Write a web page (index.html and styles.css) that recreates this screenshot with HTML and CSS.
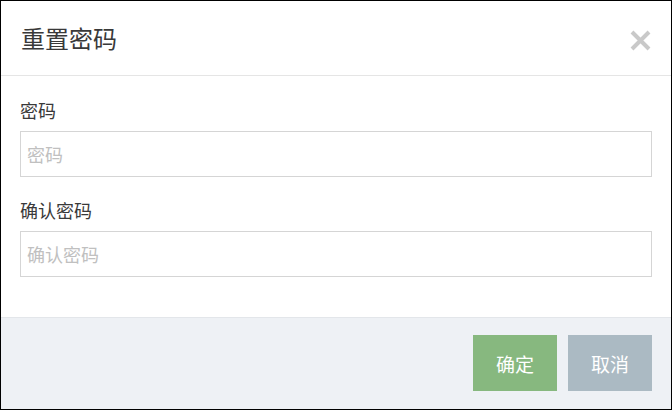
FILE: index.html
```html
<!DOCTYPE html>
<html lang="zh-CN">
<head>
<meta charset="utf-8">
<title>重置密码</title>
<link rel="stylesheet" href="styles.css">
</head>
<body>
<div class="modal">
  <div class="modal-header">
    <h4 class="modal-title">重置密码</h4>
    <button class="close" type="button" aria-label="关闭">
      <svg width="21" height="21" viewBox="0 0 21 21"><path d="M2 2 L19 19 M19 2 L2 19" stroke="#c9c9c9" stroke-width="4" stroke-linecap="butt"/></svg>
    </button>
  </div>
  <div class="modal-body">
    <div class="field">
      <label class="label">密码</label>
      <input class="input" type="password" placeholder="密码">
    </div>
    <div class="field">
      <label class="label">确认密码</label>
      <input class="input" type="password" placeholder="确认密码">
    </div>
  </div>
  <div class="modal-footer">
    <button class="btn btn-ok" type="button">确定</button>
    <button class="btn btn-cancel" type="button">取消</button>
  </div>
</div>
</body>
</html>
```
FILE: styles.css
```css
* { box-sizing: border-box; }
html, body { margin: 0; padding: 0; background: #fff; }
body {
  font-family: "Noto Sans CJK SC", "Noto Sans", sans-serif;
  color: #333;
}
.modal {
  width: 672px;
  height: 410px;
  border: 1px solid #000;
  display: flex;
  flex-direction: column;
  background: #fff;
}
.modal-header {
  height: 75px;
  border-bottom: 1px solid #e5e5e5;
  display: flex;
  align-items: center;
  justify-content: space-between;
  padding: 0 20px 0 20px;
}
.modal-title {
  margin: 0;
  font-size: 24px;
  font-weight: normal;
  line-height: 30px;
  color: #393939;
}
.close {
  border: 0;
  background: none;
  padding: 0;
  width: 21px;
  height: 21px;
  display: flex;
  margin-top: 4px;
}
.modal-body {
  flex: 1;
  padding: 22px 19px 0 19px;
  display: flex;
  flex-direction: column;
  gap: 21px;
}
.field {
  display: flex;
  flex-direction: column;
  gap: 9px;
}
.label {
  font-size: 18px;
  line-height: 24px;
  color: #393939;
}
.input {
  height: 46px;
  width: 100%;
  border: 1px solid #d5d5d5;
  padding: 0 6px;
  font-family: inherit;
  font-size: 18px;
  color: #333;
  outline: none;
}
.input::placeholder { color: #c0c0c0; }
.modal-footer {
  height: 92px;
  border-top: 1px solid #e3e6ea;
  background: #eef1f5;
  display: flex;
  justify-content: flex-end;
  align-items: flex-start;
  gap: 11px;
  padding: 17px 19px 0 0;
}
.btn {
  width: 84px;
  height: 56px;
  border: 0;
  font-family: inherit;
  font-size: 19px;
  color: #fff;
  padding: 0;
}
.btn-ok { background: #87b87f; }
.btn-cancel { background: #abbac3; }
```
